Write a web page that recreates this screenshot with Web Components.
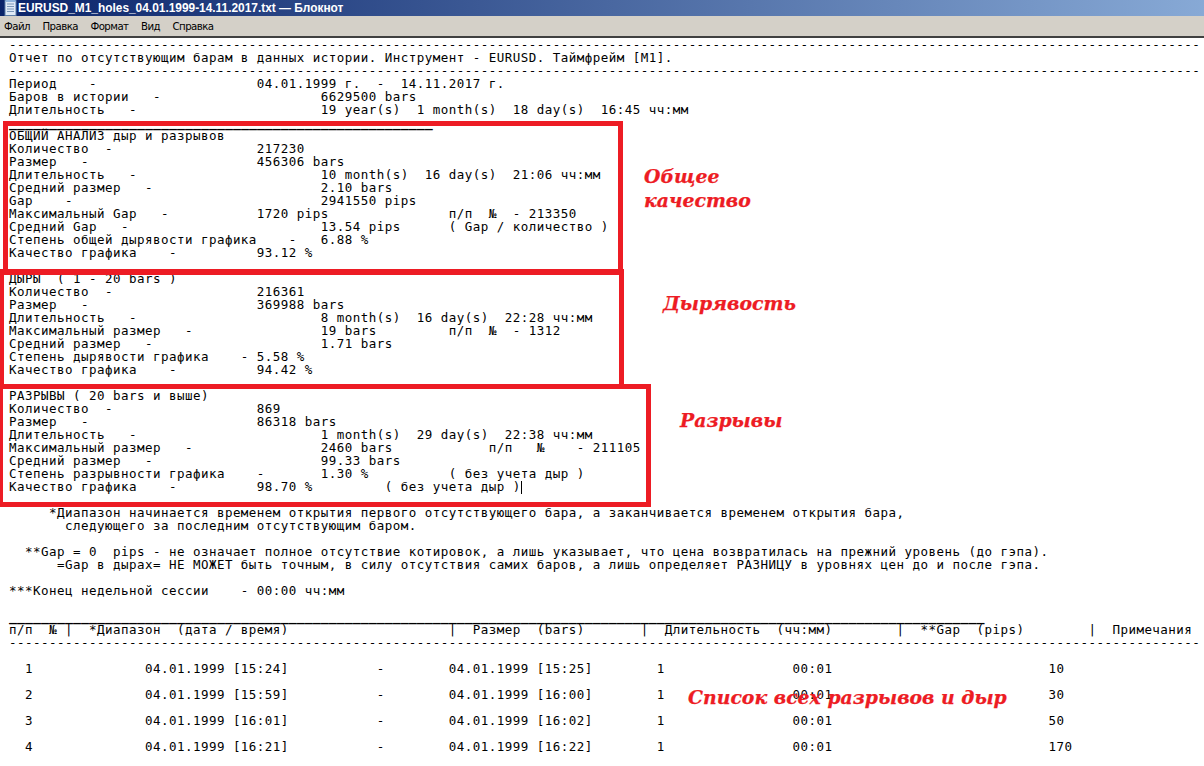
<!DOCTYPE html>
<html lang="ru"><head><meta charset="utf-8"><title>Блокнот</title>
<style>html,body{margin:0;padding:0;height:100%;overflow:hidden;background:#fff}</style></head>
<body>
<np-window title-text="EURUSD_M1_holes_04.01.1999-14.11.2017.txt — Блокнот">
  <np-menu slot="menu"><span>Файл</span><span>Правка</span><span>Формат</span><span>Вид</span><span>Справка</span></np-menu>
  <np-report></np-report>
</np-window>
<script>
class NpWindow extends HTMLElement{
  constructor(){super();const s=this.attachShadow({mode:'open'});
  s.innerHTML=`<style>
  :host{display:flex;flex-direction:column;width:1204px;height:766px;overflow:hidden;background:#fff}
  .title{height:16px;flex:none;display:flex;align-items:center;gap:1px;padding-left:4px;background:linear-gradient(90deg,#0a246a 0,#a6caf0 1500px);color:#fff;font:bold 11.9px "Liberation Sans",sans-serif;white-space:pre}
  svg{flex:none}
  .body{flex:1;min-height:0;border-top:2px solid #404040;position:relative;overflow:hidden}
  </style>
  <div class="title"><svg width="13" height="16" viewBox="0 0 13 16"><rect x="1" y="0.5" width="11" height="15" fill="#dfeaf6" stroke="#5d7fa8"/><path d="M3 4h7M3 6.5h7M3 9h7M3 11.5h7" stroke="#7b97b8"/><path d="M1.5 0h10v2h-10z" fill="#8fb4dc"/></svg><span id="t"></span></div>
  <slot name="menu"></slot><div class="body"><slot></slot></div>`;
  s.getElementById('t').textContent=this.getAttribute('title-text');}
}
class NpMenu extends HTMLElement{
  constructor(){super();this.attachShadow({mode:'open'}).innerHTML=`<style>
  :host{display:flex;flex:none;height:20px;align-items:center;gap:12.5px;padding-left:4px;background:#d4d0c8;color:#000;font:10.2px "DejaVu Sans",sans-serif;letter-spacing:-.55px}
  </style><slot></slot>`;}
}
const L=(...a)=>{let s='';for(let i=0;i<a.length;i+=2){s=s.padEnd(a[i],' ')+a[i+1];}return s;};
const dashes='-'.repeat(149);
const LINES=[
 dashes,
 L(0,'Отчет по отсутствующим барам в данных истории. Инструмент - EURUSD. Таймфрейм [M1].'),
 dashes,
 L(0,'Период',10,'-',31,'04.01.1999 г.',46,'-',49,'14.11.2017 г.'),
 L(0,'Баров в истории',18,'-',39,'6629500 bars'),
 L(0,'Длительность',15,'-',39,'19 year(s)  1 month(s)  18 day(s)  16:45 чч:мм'),
 '_'.repeat(53),
 'ОБЩИЙ АНАЛИЗ дыр и разрывов',
 L(0,'Количество',12,'-',31,'217230'),
 L(0,'Размер',9,'-',31,'456306 bars'),
 L(0,'Длительность',15,'-',39,'10 month(s)  16 day(s)  21:06 чч:мм'),
 L(0,'Средний размер',17,'-',39,'2.10 bars'),
 L(0,'Gap',7,'-',39,'2941550 pips'),
 L(0,'Максимальный Gap',19,'-',31,'1720 pips',55,'п/п  №  - 213350'),
 L(0,'Средний Gap',14,'-',39,'13.54 pips',55,'( Gap / количество )'),
 L(0,'Степень общей дырявости графика',35,'-',39,'6.88 %'),
 L(0,'Качество графика',20,'-',31,'93.12 %'),
 '',
 'ДЫРЫ  ( 1 - 20 bars )',
 L(0,'Количество',12,'-',31,'216361'),
 L(0,'Размер',9,'-',31,'369988 bars'),
 L(0,'Длительность',15,'-',39,'8 month(s)  16 day(s)  22:28 чч:мм'),
 L(0,'Максимальный размер',22,'-',39,'19 bars',55,'п/п  №  - 1312'),
 L(0,'Средний размер',17,'-',39,'1.71 bars'),
 L(0,'Степень дырявости графика',29,'-',31,'5.58 %'),
 L(0,'Качество графика',20,'-',31,'94.42 %'),
 '',
 'РАЗРЫВЫ ( 20 bars и выше)',
 L(0,'Количество',12,'-',31,'869'),
 L(0,'Размер',9,'-',31,'86318 bars'),
 L(0,'Длительность',15,'-',39,'1 month(s)  29 day(s)  22:38 чч:мм'),
 L(0,'Максимальный размер',22,'-',39,'2460 bars',60,'п/п',66,'№',71,'- 211105'),
 L(0,'Средний размер',17,'-',39,'99.33 bars'),
 L(0,'Степень разрывности графика',31,'-',39,'1.30 %',55,'( без учета дыр )'),
 L(0,'Качество графика',20,'-',31,'98.70 %',47,'( без учета дыр )'),
 '',
 L(5,'*Диапазон начинается временем открытия первого отсутствующего бара, а заканчивается временем открытия бара,'),
 L(7,'следующего за последним отсутствующим баром.'),
 '',
 L(2,'**Gap = 0  pips - не означает полное отсутствие котировок, а лишь указывает, что цена возвратилась на прежний уровень (до гэпа).'),
 L(6,'=Gap в дырах= НЕ МОЖЕТ быть точным, в силу отсутствия самих баров, а лишь определяет РАЗНИЦУ в уровнях цен до и после гэпа.'),
 '',
 L(0,'***Конец недельной сессии',29,'-',31,'00:00 чч:мм'),
 '',
 '_'.repeat(122),
 L(0,'п/п  № |',10,'*Диапазон  (дата / время)',55,'|',58,'Размер  (bars)',79,'|',82,'Длительность  (чч:мм)',111,'|',114,'**Gap  (pips)',135,'|',138,'Примечания'),
 dashes,
 '',
 ...[['1','15:24','15:25','10'],['2','15:59','16:00','30'],['3','16:01','16:02','50'],['4','16:21','16:22','170']].flatMap(r=>[
   L(2,r[0],17,'04.01.1999 ['+r[1]+']',46,'-',55,'04.01.1999 ['+r[2]+']',81,'1',98,'00:01',130,r[3]),'']),
];
class NpReport extends HTMLElement{
  constructor(){super();const s=this.attachShadow({mode:'open'});
  s.innerHTML=`<style>
  :host{display:block;position:relative;height:100%;overflow:hidden;background:#fff}
  pre{margin:0;padding:0 0 0 9px;font:12.5px/13px "DejaVu Sans Mono",monospace;letter-spacing:.47px;color:#000;white-space:pre}
  .u{font-size:13.29px;letter-spacing:0;font-weight:bold}
  .box{position:absolute;border:5px solid #ed1c24;box-sizing:border-box}
  .note{position:absolute;color:#ed1c24;font:italic bold 18.85px/24px "DejaVu Serif",serif;-webkit-text-stroke:.25px #ed1c24;white-space:pre}
  .caret{position:absolute;left:521px;top:443px;width:1px;height:13px;background:#000}
  </style><pre id="p"></pre>
  <div class="caret"></div>
  <div class="box" style="left:3px;top:83px;width:620px;height:154px"></div>
  <div class="box" style="left:-1px;top:231px;width:625px;height:120px"></div>
  <div class="box" style="left:-2px;top:346px;width:653px;height:123px"></div>
  <div class="note" style="left:644px;top:126px">Общее</div>
  <div class="note" style="left:644px;top:150px">качество</div>
  <div class="note" style="left:663px;top:253px">Дырявость</div>
  <div class="note" style="left:680px;top:370px">Разрывы</div>
  <div class="note" style="left:688px;top:647px">Список всех разрывов и дыр</div>`;
  const p=s.getElementById('p');
  LINES.forEach(t=>{
    if(t[0]==='_'){const u=document.createElement('span');u.className='u';u.textContent=t;p.append(u);}
    else p.append(t);
    p.append('\n');
  });}
}
customElements.define('np-window',NpWindow);
customElements.define('np-menu',NpMenu);
customElements.define('np-report',NpReport);
</script>
</body></html>
